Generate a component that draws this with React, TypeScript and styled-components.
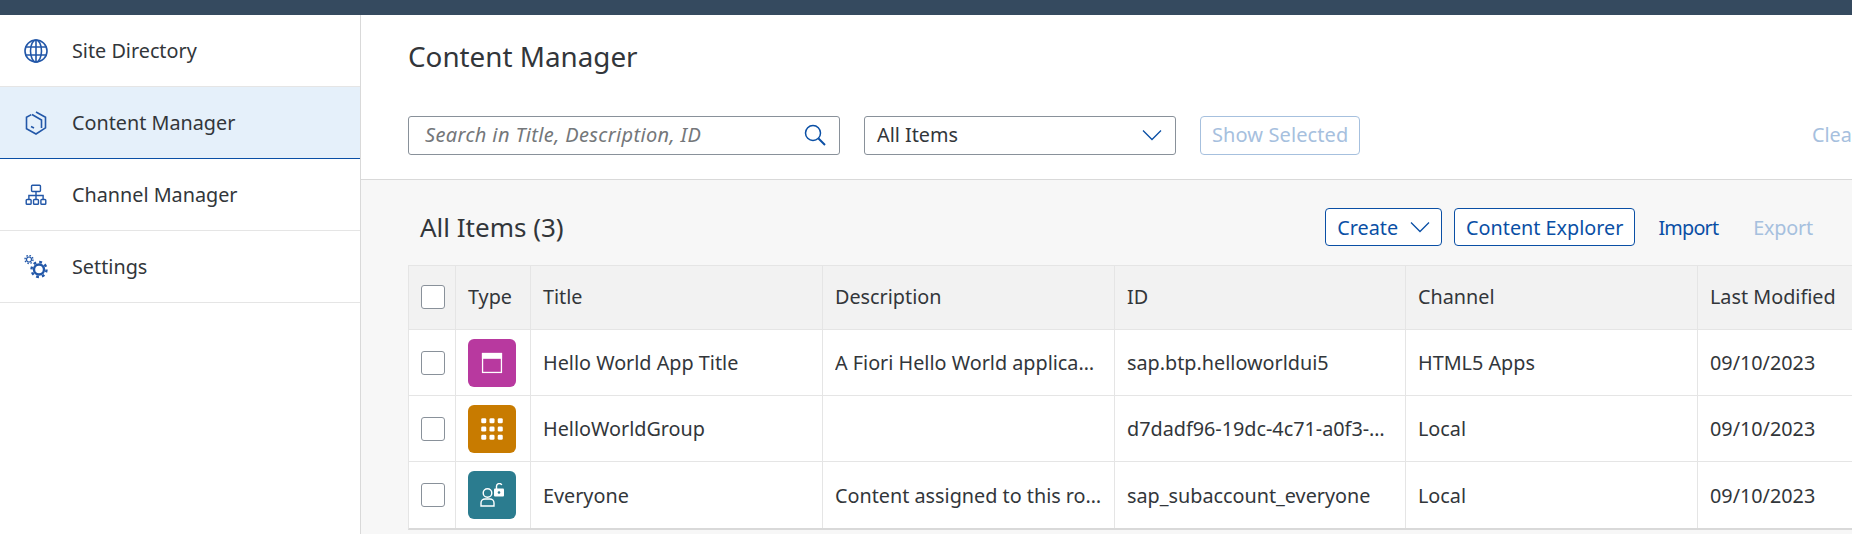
import styled, { createGlobalStyle } from 'styled-components';
import type { ReactNode } from 'react';

const GlobalStyle = createGlobalStyle`
    html, body {
        margin: 0;
        padding: 0;
        height: 100%;
        overflow: hidden;
        background: #fff;
    }
    * {
        box-sizing: border-box;
    }
`;

const Page = styled.div`
    width: 1852px;
    height: 534px;
    overflow: hidden;
    display: flex;
    flex-direction: column;
    font-family: "Noto Sans", "Open Sans", sans-serif;
    color: #32363a;
`;

const ShellBar = styled.div`
    height: 15px;
    flex: none;
    background: #354a5f;
`;

const Body = styled.div`
    flex: 1;
    display: flex;
    min-height: 0;
`;

const Sidebar = styled.nav`
    width: 361px;
    flex: none;
    background: #fff;
    border-right: 1px solid #d9d9d9;
`;

const NavItem = styled.div<{ $active?: boolean }>`
    height: 72px;
    display: flex;
    align-items: center;
    padding-left: 24px;
    gap: 24px;
    font-size: 19.8px;
    background: ${(p) => (p.$active ? '#e5f0fa' : '#fff')};
    border-bottom: 1px solid ${(p) => (p.$active ? '#0a4fa5' : '#e5e5e5')};
`;

const NavIcon = styled.svg`
    width: 24px;
    height: 24px;
    flex: none;
    fill: none;
    stroke: #2257a8;
    stroke-width: 1.6;
`;

const Main = styled.main`
    flex: 1;
    min-width: 0;
    display: flex;
    flex-direction: column;
    background: #f7f7f7;
`;

const Header = styled.header`
    height: 165px;
    flex: none;
    background: #fff;
    border-bottom: 1px solid #d9d9d9;
    padding: 22px 0 0 47px;
`;

const PageTitle = styled.h1`
    margin: 0;
    font-size: 27.8px;
    font-weight: 400;
    line-height: 38px;
    color: #32363a;
`;

const FilterRow = styled.div`
    display: flex;
    align-items: center;
    margin-top: 41px;
    height: 39px;
`;

const SearchBox = styled.div`
    width: 432px;
    height: 39px;
    display: flex;
    align-items: center;
    justify-content: space-between;
    padding: 0 13px 2px 16px;
    background: #fff;
    border: 1px solid #89919a;
    border-radius: 3px;
    font-size: 20px;
    letter-spacing: 0.36px;
    font-style: italic;
    color: #74777a;
`;

const SelectBox = styled.div`
    width: 312px;
    height: 39px;
    margin-left: 24px;
    display: flex;
    align-items: center;
    justify-content: space-between;
    padding: 0 13px 2px 12px;
    background: #fff;
    border: 1px solid #89919a;
    border-radius: 3px;
    font-size: 19.8px;
`;

const DisabledButton = styled.div`
    height: 39px;
    margin-left: 24px;
    padding: 0 11px 2px;
    display: flex;
    align-items: center;
    border: 1px solid #a6c0de;
    border-radius: 4px;
    font-size: 20px;
    letter-spacing: 0.1px;
    color: #a6c0de;
`;

const ClearLink = styled.div`
    margin-left: auto;
    width: 40px;
    flex: none;
    overflow: hidden;
    white-space: nowrap;
    font-size: 19.8px;
    padding-bottom: 2px;
    color: #a6c0de;
`;

const Section = styled.section`
    flex: 1;
    min-height: 0;
    padding-left: 47px;
    background: #f7f7f7;
`;

const Toolbar = styled.div`
    height: 85px;
    display: flex;
    align-items: center;
    padding: 9px 39px 0 12px;
`;

const SectionTitle = styled.h2`
    margin: 0;
    font-size: 26px;
    font-weight: 400;
    color: #32363a;
`;

const Actions = styled.div`
    margin-left: auto;
    display: flex;
    align-items: center;
    gap: 12px;
`;

const OutlineButton = styled.div`
    height: 38px;
    padding: 0 11px;
    display: flex;
    align-items: center;
    gap: 12px;
    background: #fff;
    border: 1px solid #0a4fa5;
    border-radius: 4px;
    font-size: 19.8px;
    color: #0a4fa5;
`;

const TextButton = styled.div<{ $disabled?: boolean }>`
    margin-left: 11px;
    font-size: 19.8px;
    letter-spacing: ${(p) => (p.$disabled ? -0.2 : -0.8)}px;
    color: ${(p) => (p.$disabled ? '#a6c0de' : '#0a4fa5')};
    & + & {
        margin-left: 23px;
    }
`;

const Table = styled.div`
    width: 1500px;
    border-top: 1px solid #e5e5e5;
    border-bottom: 2px solid #d9d9d9;
    border-left: 1px solid #e5e5e5;
`;

const Row = styled.div<{ $head?: boolean }>`
    display: grid;
    grid-template-columns: 47px 75px 292px 292px 291px 292px 1fr;
    height: ${(p) => (p.$head ? 64 : 66)}px;
    background: ${(p) => (p.$head ? '#f2f2f2' : '#fff')};
    border-bottom: 1px solid #e5e5e5;
    &:last-child {
        border-bottom: none;
    }
`;

const Cell = styled.div<{ $head?: boolean }>`
    min-width: 0;
    display: flex;
    align-items: center;
    padding: 0 12px ${(p) => (p.$head ? 2 : 0)}px 12px;
    border-right: 1px solid #e5e5e5;
    font-size: 19.8px;
    color: #32363a;
    white-space: nowrap;
    overflow: hidden;
`;

const Truncated = styled.span<{ $maxWidth?: number }>`
    overflow: hidden;
    text-overflow: ellipsis;
    max-width: ${(p) => (p.$maxWidth ? `${p.$maxWidth}px` : 'none')};
`;

const Checkbox = styled.div`
    width: 24px;
    height: 24px;
    flex: none;
    background: #fff;
    border: 1px solid #89919a;
    border-radius: 3px;
`;

const TypeBadge = styled.div<{ $color: string }>`
    width: 48px;
    height: 48px;
    flex: none;
    border-radius: 6px;
    display: flex;
    align-items: center;
    justify-content: center;
    background: ${(p) => p.$color};
`;

const BadgeIcon = styled.svg<{ $size: number }>`
    width: ${(p) => p.$size}px;
    height: ${(p) => p.$size}px;
    fill: none;
    stroke: #fff;
    stroke-width: 1.4;
`;

const GlobeIcon = () => (
    <NavIcon viewBox="0 0 24 24">
        <circle cx="12" cy="12" r="11" />
        <ellipse cx="12" cy="12" rx="5.5" ry="11" />
        <path d="M1.5 8h21M1.5 16h21M12 1v22" />
    </NavIcon>
);

const PackageIcon = () => (
    <NavIcon viewBox="0 0 24 24">
        <path d="M12 1l9.5 5.2v10.6L12 23l-9.500-5.200V6.200l4.800-2.600" />
        <path d="M8 3.500l9.500 5.500v8M7 15.500l3 1.500" />
    </NavIcon>
);

const HierarchyIcon = () => (
    <NavIcon viewBox="-1.500 -1.500 27 27">
        <rect x="7" y="1" width="10" height="7" rx="1" />
        <rect x="1" y="17" width="5.500" height="5.500" rx="1" />
        <rect x="9.250" y="17" width="5.500" height="5.500" rx="1" />
        <rect x="17.500" y="17" width="5.500" height="5.500" rx="1" />
        <path d="M12 8v9M4 17v-4.500h16V17" />
    </NavIcon>
);

const SettingsIcon = () => (
    <NavIcon viewBox="0 0 24 24">
        <circle cx="15" cy="14.500" r="5" strokeWidth="2.400" />
        <circle cx="15" cy="14.500" r="7.500" strokeWidth="2.400" strokeDasharray="2.800 3.090" />
        <circle cx="5" cy="4.500" r="2.500" strokeWidth="1.200" />
        <circle cx="5" cy="4.500" r="4" strokeWidth="1.400" strokeDasharray="1.500 1.640" />
    </NavIcon>
);

type ItemRow = {
    color: string;
    icon: ReactNode;
    title: string;
    description: string;
    descriptionWidth?: number;
    id: string;
    channel: string;
};

const items: ItemRow[] = [
    {
        color: '#b8399f',
        icon: (
            <BadgeIcon $size={22} viewBox="0 0 24 24">
                <rect x="1.700" y="1.700" width="20.600" height="20.600" />
                <rect x="1.700" y="1.700" width="20.600" height="5" fill="#fff" />
            </BadgeIcon>
        ),
        title: 'Hello World App Title',
        description: 'A Fiori Hello World application',
        descriptionWidth: 262,
        id: 'sap.btp.helloworldui5',
        channel: 'HTML5 Apps',
    },
    {
        color: '#c87b00',
        icon: (
            <BadgeIcon $size={22} viewBox="0 0 24 24">
                {[0, 9, 18].map((y) =>
                    [0, 9, 18].map((x) => (
                        <rect key={`${x}-${y}`} x={x + 0.25} y={y + 0.25} width="5.500" height="5.500" rx="1.500" fill="#fff" stroke="none" />
                    ))
                )}
            </BadgeIcon>
        ),
        title: 'HelloWorldGroup',
        description: '',
        id: 'd7dadf96-19dc-4c71-a0f3-5b2e9c41d7aa',
        channel: 'Local',
    },
    {
        color: '#2b7c8f',
        icon: (
            <BadgeIcon $size={24} viewBox="0 0 24 24">
                <circle cx="7.500" cy="10" r="4.300" />
                <path d="M1 23v-3c0-2.500 2-4 4-4h5c2 0 4 1.500 4 4v3z" />
                <path d="M16.500 6V3.200a2.800 2.800 0 0 1 5.300-1.200" />
                <rect x="14" y="5.500" width="10" height="8" rx="1" fill="#fff" stroke="none" />
                <circle cx="19" cy="9.500" r="1.300" fill="#2b7c8f" stroke="none" />
            </BadgeIcon>
        ),
        title: 'Everyone',
        description: 'Content assigned to this role is visible to everyone',
        id: 'sap_subaccount_everyone',
        channel: 'Local',
    },
];

export default function App() {
    return (
        <Page>
            <GlobalStyle />
            <ShellBar />
            <Body>
                <Sidebar>
                    <NavItem><GlobeIcon />Site Directory</NavItem>
                    <NavItem $active><PackageIcon />Content Manager</NavItem>
                    <NavItem><HierarchyIcon />Channel Manager</NavItem>
                    <NavItem><SettingsIcon />Settings</NavItem>
                </Sidebar>
                <Main>
                    <Header>
                        <PageTitle>Content Manager</PageTitle>
                        <FilterRow>
                            <SearchBox>
                                Search in Title, Description, ID
                                <svg width="22" height="22" viewBox="0 0 22 22" fill="none" stroke="#0a4fa5" strokeWidth="1.500">
                                    <circle cx="9" cy="9" r="7.500" />
                                    <path d="M14.500 14.500l6.500 6.500" strokeWidth="2" />
                                </svg>
                            </SearchBox>
                            <SelectBox>
                                All Items
                                <svg width="20" height="12" viewBox="0 0 20 12" fill="none" stroke="#0a4fa5" strokeWidth="1.300">
                                    <path d="M1 1.500l9 9 9-9" />
                                </svg>
                            </SelectBox>
                            <DisabledButton>Show Selected</DisabledButton>
                            <ClearLink>Clear</ClearLink>
                        </FilterRow>
                    </Header>
                    <Section>
                        <Toolbar>
                            <SectionTitle>All Items (3)</SectionTitle>
                            <Actions>
                                <OutlineButton>
                                    Create
                                    <svg width="20" height="12" viewBox="0 0 20 12" fill="none" stroke="#0a4fa5" strokeWidth="1.300">
                                        <path d="M1 1.500l9 9 9-9" />
                                    </svg>
                                </OutlineButton>
                                <OutlineButton>Content Explorer</OutlineButton>
                                <TextButton>Import</TextButton>
                                <TextButton $disabled>Export</TextButton>
                            </Actions>
                        </Toolbar>
                        <Table>
                            <Row $head>
                                <Cell $head><Checkbox /></Cell>
                                <Cell $head>Type</Cell>
                                <Cell $head>Title</Cell>
                                <Cell $head>Description</Cell>
                                <Cell $head>ID</Cell>
                                <Cell $head>Channel</Cell>
                                <Cell $head>Last Modified</Cell>
                            </Row>
                            {items.map((item) => (
                                <Row key={item.title}>
                                    <Cell><Checkbox /></Cell>
                                    <Cell><TypeBadge $color={item.color}>{item.icon}</TypeBadge></Cell>
                                    <Cell><Truncated>{item.title}</Truncated></Cell>
                                    <Cell><Truncated $maxWidth={item.descriptionWidth}>{item.description}</Truncated></Cell>
                                    <Cell><Truncated>{item.id}</Truncated></Cell>
                                    <Cell><Truncated>{item.channel}</Truncated></Cell>
                                    <Cell>09/10/2023</Cell>
                                </Row>
                            ))}
                        </Table>
                    </Section>
                </Main>
            </Body>
        </Page>
    );
}
